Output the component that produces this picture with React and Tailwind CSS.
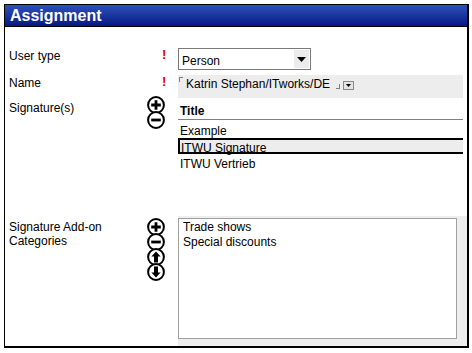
import React from "react";

const CircleIcon = ({ kind }) => (
  <svg width="18" height="18" viewBox="0 0 18 18" className="block">
    <circle cx="9" cy="9" r="7.9" fill="white" stroke="black" strokeWidth="2" />
    {kind === "plus" && <path d="M9 4.2v9.6M4.2 9h9.6" stroke="black" strokeWidth="2.8" />}
    {kind === "minus" && <path d="M4.2 9h9.6" stroke="black" strokeWidth="2.8" />}
    {kind === "up" && <path d="M9 3.5l4.6 5h-2.6v6H7v-6H4.4z" fill="black" />}
    {kind === "down" && <path d="M9 14.5l4.6-5h-2.6v-6H7v6H4.4z" fill="black" />}
  </svg>
);

const Required = () => (
  <span className="ml-[14px] text-[13px] font-bold text-[#e00000]">!</span>
);

const Row = ({ label, mid, children, className = "" }) => (
  <div className={`flex ${className}`}>
    <div className="w-[139px] shrink-0">{label}</div>
    <div className="w-[30px] shrink-0">{mid}</div>
    <div className="flex-1 min-w-0">{children}</div>
  </div>
);

export default function App() {
  return (
    <div
      className="ml-[4px] mt-[4px] w-[465px] h-[344px] border border-black border-r-2 border-b-2 flex flex-col bg-white text-[12px] leading-[14px] text-black"
      style={{ fontFamily: '"Liberation Sans", Arial, sans-serif' }}
    >
      <div className="h-[22px] shrink-0 border-b border-black bg-gradient-to-b from-[#2f51b8] to-[#0a1684] pl-[5px] text-[16px] font-bold leading-[21px] text-white">
        Assignment
      </div>

      <div className="flex flex-1 flex-col pl-[4px] pr-[4px] pt-[21px]">
        <Row
          className="h-[22px]"
          label={<div className="pt-[1px]">User type</div>}
          mid={<div><Required /></div>}
        >
          <div className="flex h-[22px] w-[133px] border border-[#7a7a7a] bg-white">
            <div className="flex-1 pl-[3px] pt-[5px]">Person</div>
            <div className="m-[1px] flex w-[16px] items-center justify-center border-l border-white bg-[#ececec]">
              <svg width="9" height="5" viewBox="0 0 9 5"><path d="M0 0h9L4.5 5z" fill="black" /></svg>
            </div>
          </div>
        </Row>

        <Row
          className="mt-[5px] h-[23px]"
          label={<div className="pt-[1px]">Name</div>}
          mid={<div><Required /></div>}
        >
          <div className="relative flex h-[23px] items-start bg-[#ededed] pl-[8px] pt-[2px]">
            <span className="absolute left-[1px] top-[2px] h-[5px] w-[4px] border-l border-t border-[#808080]" />
            <span>Katrin Stephan/ITworks/DE</span>
            <span className="ml-[6px] mt-[7px] h-[5px] w-[4px] border-b border-r border-[#808080]" />
            <span className="ml-[3px] mt-[4px] flex h-[9px] w-[11px] items-center justify-center border border-[#8a8a8a] bg-[#e4e4e4]">
              <svg width="5" height="3" viewBox="0 0 5 3"><path d="M0 0h5L2.5 3z" fill="black" /></svg>
            </span>
          </div>
        </Row>

        <Row
          label={<div className="pt-[3px]">Signature(s)</div>}
          mid={
            <div className="-mt-[2px] -ml-[1px] flex flex-col">
              <CircleIcon kind="plus" />
              <div className="-mt-[3px]"><CircleIcon kind="minus" /></div>
            </div>
          }
        >
          <div className="flex flex-col">
            <div className="h-[22px] border-b border-[#808080] pl-[2px] pt-[6px] font-bold">Title</div>
            <div className="h-[18px] pl-[2px] pt-[4px]">Example</div>
            <div className="h-[16px] border-y-2 border-l-2 border-black bg-[#ededed] pl-[1px] leading-[12px]">
              <div className="mt-[2px] whitespace-nowrap">ITWU Signature</div>
            </div>
            <div className="h-[17px] pl-[2px] pt-[3px]">ITWU Vertrieb</div>
          </div>
        </Row>

        <Row
          className="mt-[45px] flex-1"
          label={<div className="pt-[4px]">Signature Add-on<br />Categories</div>}
          mid={
            <div className="mt-[2px] -ml-[1px] flex flex-col">
              <CircleIcon kind="plus" />
              <div className="-mt-[3px]"><CircleIcon kind="minus" /></div>
              <div className="-mt-[3px]"><CircleIcon kind="up" /></div>
              <div className="-mt-[3px]"><CircleIcon kind="down" /></div>
            </div>
          }
        >
          <div className="-mr-[4px] flex h-full flex-col bg-[#eeeeee] pb-[7px] pr-[10px] pt-[2px]">
            <div className="flex-1 border border-[#a0a0a0] bg-white pl-[4px] pt-[1px] leading-[15px]">
              <div>Trade shows</div>
              <div>Special discounts</div>
            </div>
          </div>
        </Row>
      </div>
    </div>
  );
}
